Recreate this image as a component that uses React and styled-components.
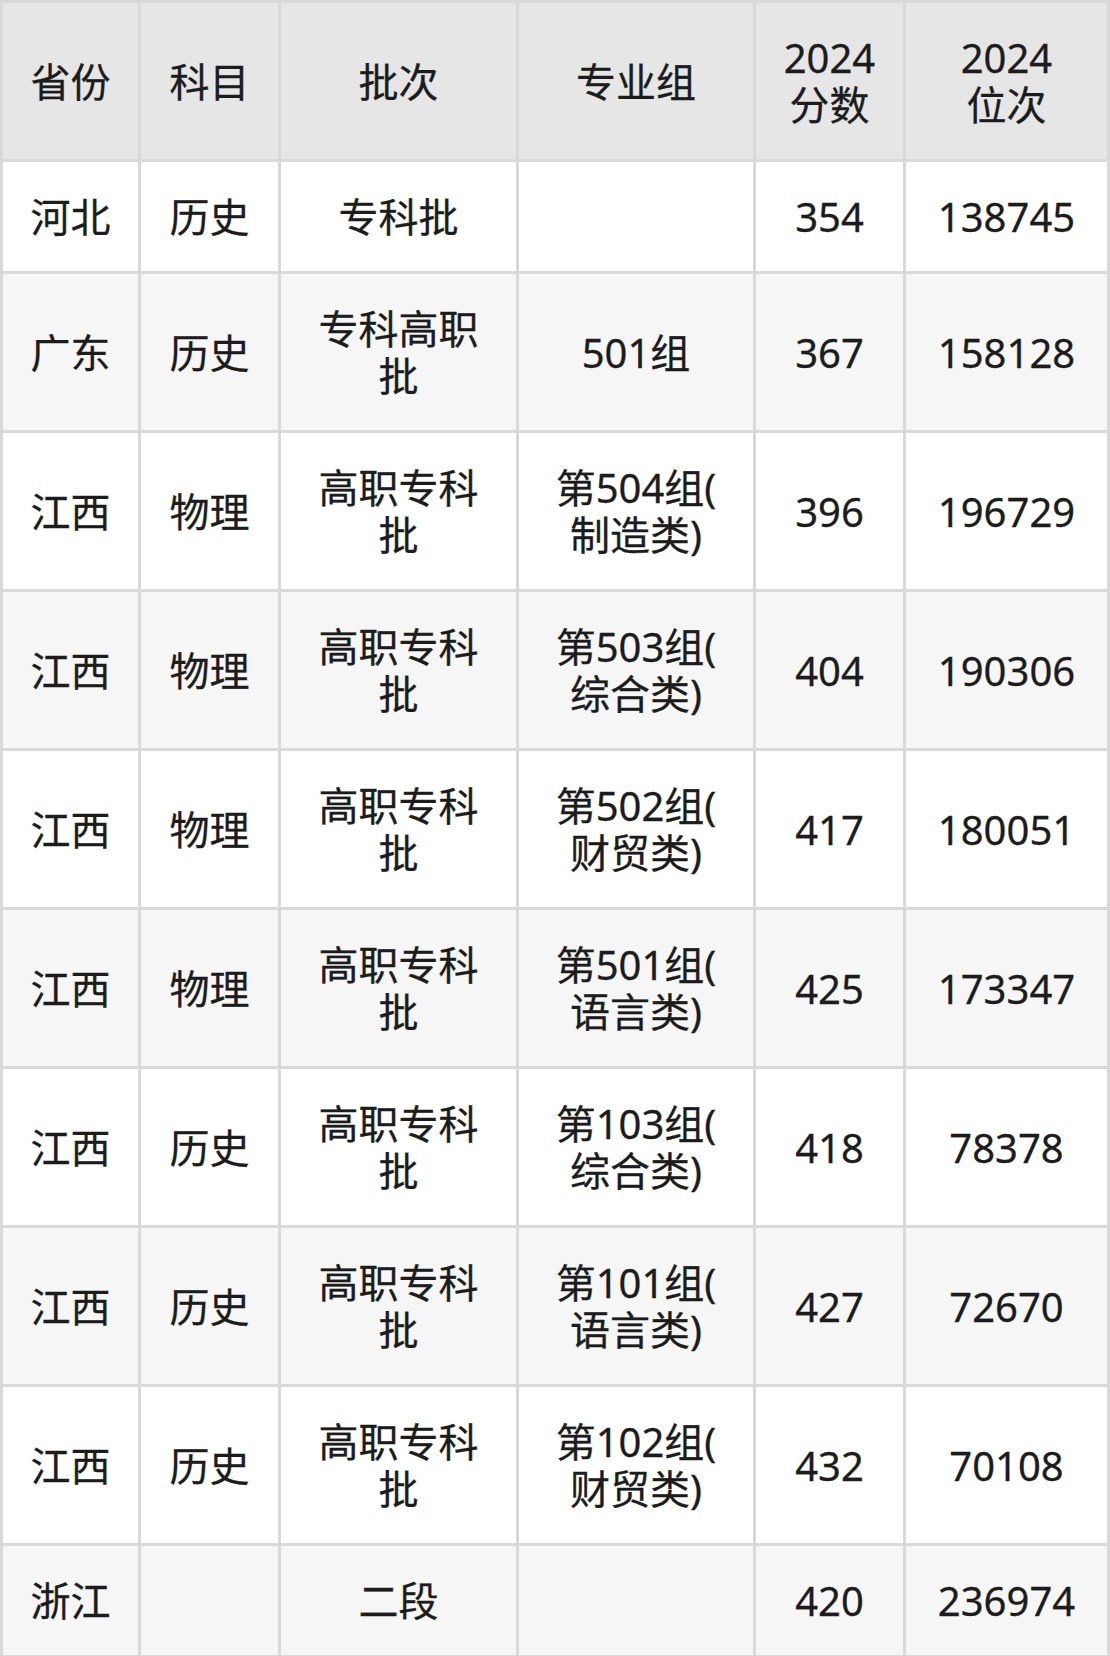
import React from "react";
import styled, { createGlobalStyle } from "styled-components";

const GlobalStyle = createGlobalStyle`
  html, body { margin: 0; padding: 0; background: #ffffff; }
  body { font-family: "Noto Sans", "Noto Sans CJK SC", sans-serif; }
`;

const Grid = styled.div`
  display: grid;
  grid-template-columns: 135px 137px 235px 234px 147px 201px;
  gap: 3px;
  padding: 3px;
  width: 1110px;
  box-sizing: border-box;
  background: #d9d9d9;
`;

const Cell = styled.div`
  background: ${(p) => (p.$head ? "#e6e6e6" : p.$alt ? "#f6f6f6" : "#ffffff")};
  color: #1c1c1c;
  font-family: "Noto Sans", "Noto Sans CJK SC", sans-serif;
  font-size: 40px;
  line-height: 47px;
  padding: 31px 6px;
  display: flex;
  flex-direction: column;
  align-items: center;
  justify-content: center;
  text-align: center;
  white-space: nowrap;
  -webkit-text-stroke: 0.3px #1c1c1c;
`;

const Line = styled.span`
  display: block;
`;

const header = [["省份"], ["科目"], ["批次"], ["专业组"], ["2024", "分数"], ["2024", "位次"]];

const rows = [
  [["河北"], ["历史"], ["专科批"], [], ["354"], ["138745"]],
  [["广东"], ["历史"], ["专科高职", "批"], ["501组"], ["367"], ["158128"]],
  [["江西"], ["物理"], ["高职专科", "批"], ["第504组(", "制造类)"], ["396"], ["196729"]],
  [["江西"], ["物理"], ["高职专科", "批"], ["第503组(", "综合类)"], ["404"], ["190306"]],
  [["江西"], ["物理"], ["高职专科", "批"], ["第502组(", "财贸类)"], ["417"], ["180051"]],
  [["江西"], ["物理"], ["高职专科", "批"], ["第501组(", "语言类)"], ["425"], ["173347"]],
  [["江西"], ["历史"], ["高职专科", "批"], ["第103组(", "综合类)"], ["418"], ["78378"]],
  [["江西"], ["历史"], ["高职专科", "批"], ["第101组(", "语言类)"], ["427"], ["72670"]],
  [["江西"], ["历史"], ["高职专科", "批"], ["第102组(", "财贸类)"], ["432"], ["70108"]],
  [["浙江"], [], ["二段"], [], ["420"], ["236974"]],
];

const renderLines = (lines) =>
  lines.length === 0 ? <Line>&nbsp;</Line> : lines.map((l, i) => <Line key={i}>{l}</Line>);

export default function App() {
  return (
    <>
      <GlobalStyle />
      <Grid>
        {header.map((c, i) => (
          <Cell key={`h${i}`} $head>
            {renderLines(c)}
          </Cell>
        ))}
        {rows.map((r, ri) =>
          r.map((c, ci) => (
            <Cell key={`${ri}-${ci}`} $alt={ri % 2 === 1}>
              {renderLines(c)}
            </Cell>
          ))
        )}
      </Grid>
    </>
  );
}
